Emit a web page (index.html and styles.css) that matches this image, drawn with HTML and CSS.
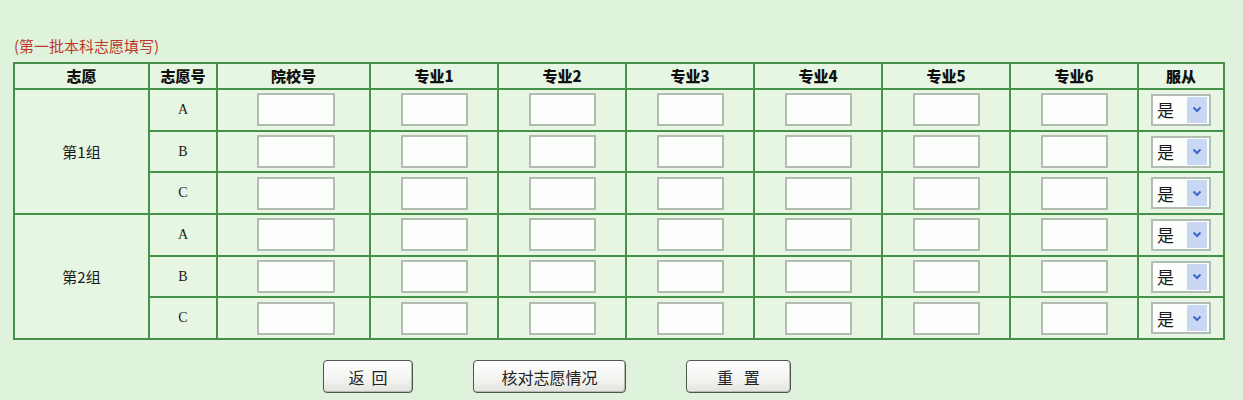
FILE: index.html
```html
<!DOCTYPE html>
<html lang="zh-CN">
<head>
<meta charset="utf-8">
<title>第一批本科志愿填写</title>
<link rel="stylesheet" href="styles.css">
</head>
<body>
<div class="page">
  <div class="title">(第一批本科志愿填写)</div>
  <table class="grid">
    <colgroup>
      <col class="c-group"><col class="c-no"><col class="c-school">
      <col class="c-major"><col class="c-major"><col class="c-major">
      <col class="c-major"><col class="c-major"><col class="c-major">
      <col class="c-obey">
    </colgroup>
    <thead>
      <tr class="head">
        <th>志愿</th><th>志愿号</th><th>院校号</th>
        <th>专业1</th><th>专业2</th><th>专业3</th><th>专业4</th><th>专业5</th><th>专业6</th>
        <th>服从</th>
      </tr>
    </thead>
    <tbody>
      <tr>
        <td class="grp" rowspan="3">第1组</td>
        <td class="letter">A</td>
        <td><input class="in-school" type="text"></td>
        <td><input class="in-major" type="text"></td><td><input class="in-major" type="text"></td><td><input class="in-major" type="text"></td>
        <td><input class="in-major" type="text"></td><td><input class="in-major" type="text"></td><td><input class="in-major" type="text"></td>
        <td><span class="sel"><span class="sel-val">是</span><span class="sel-btn"><svg width="10" height="7" viewBox="0 0 10 7"><path d="M1.5 1.5 L5 5 L8.5 1.5" fill="none" stroke="#3f66c9" stroke-width="2"/></svg></span></span></td>
      </tr>
      <tr>
        <td class="letter">B</td>
        <td><input class="in-school" type="text"></td>
        <td><input class="in-major" type="text"></td><td><input class="in-major" type="text"></td><td><input class="in-major" type="text"></td>
        <td><input class="in-major" type="text"></td><td><input class="in-major" type="text"></td><td><input class="in-major" type="text"></td>
        <td><span class="sel"><span class="sel-val">是</span><span class="sel-btn"><svg width="10" height="7" viewBox="0 0 10 7"><path d="M1.5 1.5 L5 5 L8.5 1.5" fill="none" stroke="#3f66c9" stroke-width="2"/></svg></span></span></td>
      </tr>
      <tr>
        <td class="letter">C</td>
        <td><input class="in-school" type="text"></td>
        <td><input class="in-major" type="text"></td><td><input class="in-major" type="text"></td><td><input class="in-major" type="text"></td>
        <td><input class="in-major" type="text"></td><td><input class="in-major" type="text"></td><td><input class="in-major" type="text"></td>
        <td><span class="sel"><span class="sel-val">是</span><span class="sel-btn"><svg width="10" height="7" viewBox="0 0 10 7"><path d="M1.5 1.5 L5 5 L8.5 1.5" fill="none" stroke="#3f66c9" stroke-width="2"/></svg></span></span></td>
      </tr>
      <tr>
        <td class="grp" rowspan="3">第2组</td>
        <td class="letter">A</td>
        <td><input class="in-school" type="text"></td>
        <td><input class="in-major" type="text"></td><td><input class="in-major" type="text"></td><td><input class="in-major" type="text"></td>
        <td><input class="in-major" type="text"></td><td><input class="in-major" type="text"></td><td><input class="in-major" type="text"></td>
        <td><span class="sel"><span class="sel-val">是</span><span class="sel-btn"><svg width="10" height="7" viewBox="0 0 10 7"><path d="M1.5 1.5 L5 5 L8.5 1.5" fill="none" stroke="#3f66c9" stroke-width="2"/></svg></span></span></td>
      </tr>
      <tr>
        <td class="letter">B</td>
        <td><input class="in-school" type="text"></td>
        <td><input class="in-major" type="text"></td><td><input class="in-major" type="text"></td><td><input class="in-major" type="text"></td>
        <td><input class="in-major" type="text"></td><td><input class="in-major" type="text"></td><td><input class="in-major" type="text"></td>
        <td><span class="sel"><span class="sel-val">是</span><span class="sel-btn"><svg width="10" height="7" viewBox="0 0 10 7"><path d="M1.5 1.5 L5 5 L8.5 1.5" fill="none" stroke="#3f66c9" stroke-width="2"/></svg></span></span></td>
      </tr>
      <tr>
        <td class="letter">C</td>
        <td><input class="in-school" type="text"></td>
        <td><input class="in-major" type="text"></td><td><input class="in-major" type="text"></td><td><input class="in-major" type="text"></td>
        <td><input class="in-major" type="text"></td><td><input class="in-major" type="text"></td><td><input class="in-major" type="text"></td>
        <td><span class="sel"><span class="sel-val">是</span><span class="sel-btn"><svg width="10" height="7" viewBox="0 0 10 7"><path d="M1.5 1.5 L5 5 L8.5 1.5" fill="none" stroke="#3f66c9" stroke-width="2"/></svg></span></span></td>
      </tr>
    </tbody>
  </table>
  <div class="actions">
    <button class="btn btn-back" type="button">返&nbsp;&nbsp;回</button>
    <button class="btn btn-check" type="button">核对志愿情况</button>
    <button class="btn btn-reset" type="button">重&nbsp;&nbsp;&nbsp;置</button>
  </div>
</div>
</body>
</html>
```
FILE: styles.css
```css
html, body {
  margin: 0;
  padding: 0;
  background: #dff3dc;
}
body {
  font-family: "Noto Sans CJK SC", "Liberation Sans", sans-serif;
  color: #1a1a1a;
}
.page {
  padding: 36px 0 0 13px;
}
.title {
  color: #c0372e;
  font-size: 15px;
  line-height: 20px;
  height: 26px;
  padding-left: 1px;
}
.grid {
  border-collapse: collapse;
  table-layout: fixed;
  width: 1211px;
  background: #e6f6e3;
}
.c-group { width: 135px; }
.c-no { width: 68px; }
.c-school { width: 153px; }
.c-major { width: 128px; }
.c-obey { width: 86px; }
.grid th, .grid td {
  border: 2px solid #46914a;
  text-align: center;
  vertical-align: middle;
  padding: 0;
}
.grid th {
  height: 24px;
  font-size: 15px;
  font-weight: 900;
  line-height: 22px;
  color: #111;
}
.grid tbody tr {
  height: 41.7px;
}
.grp {
  font-size: 15px;
}
.letter {
  font-family: "Liberation Serif", "DejaVu Serif", serif;
  font-size: 14px;
}
input {
  box-sizing: border-box;
  height: 33px;
  border: 2px solid #b3bcb3;
  background: #fcfefc;
  margin: 0;
  display: block;
  margin-left: auto;
  margin-right: auto;
}
.in-school {
  width: 78px;
  position: relative;
  left: 2px;
}
.in-major {
  width: 67px;
}
.sel {
  box-sizing: border-box;
  display: flex;
  align-items: center;
  justify-content: space-between;
  width: 60px;
  height: 32px;
  margin: 0 auto;
  border: 2px solid #b3bcb3;
  background: #fcfefc;
  padding: 0 2px 0 4px;
}
.sel-val {
  font-size: 17px;
  line-height: 1;
}
.sel-btn {
  display: flex;
  align-items: center;
  justify-content: center;
  width: 20px;
  height: 26px;
  background: #c9d8f2;
}
.actions {
  display: flex;
  gap: 60px;
  padding: 20px 0 0 310px;
}
.btn {
  box-sizing: border-box;
  height: 33px;
  border: 1px solid #505550;
  border-radius: 4px;
  background: linear-gradient(#ffffff, #f3f3f1 60%, #e2e2de);
  font-family: "Noto Sans CJK SC", sans-serif;
  font-size: 16px;
  color: #222;
  padding: 0;
  box-shadow: inset -1px -1px 0 #b8b8b4;
}
.btn-back { width: 90px; }
.btn-check { width: 153px; }
.btn-reset { width: 105px; }
```
